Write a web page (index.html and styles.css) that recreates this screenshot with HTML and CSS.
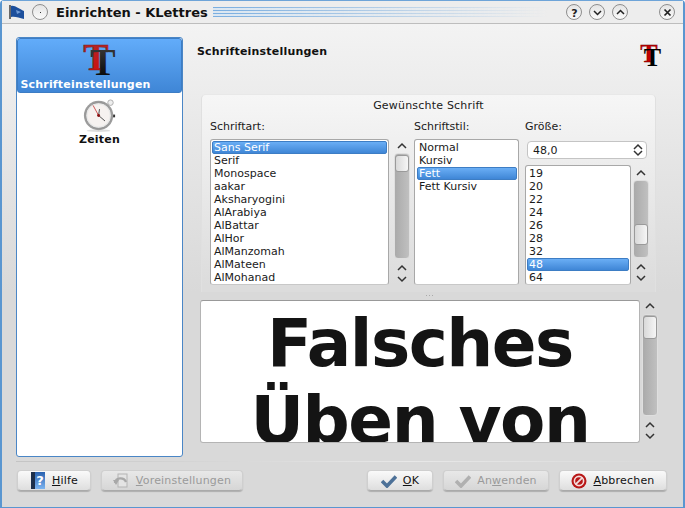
FILE: index.html
```html
<!DOCTYPE html>
<html lang="de">
<head>
    <meta charset="UTF-8">
    <meta name="viewport" content="width=device-width, initial-scale=1.0">
    <title>Einrichten - KLettres</title>
    <link rel="stylesheet" href="styles.css">
</head>
<body>
    <svg class="defs" width="0" height="0">
        <defs>
            <symbol id="chevUp" viewBox="0 0 10 7"><path d="M1 6 L5 2 L9 6" fill="none" stroke="#333" stroke-width="1.5"/></symbol>
            <symbol id="chevDown" viewBox="0 0 10 7"><path d="M1 1 L5 5 L9 1" fill="none" stroke="#333" stroke-width="1.5"/></symbol>
            <linearGradient id="redT" x1="0" y1="0" x2="0" y2="1"><stop offset="0" stop-color="#b02a2a"/><stop offset="1" stop-color="#d00c0c"/></linearGradient>
            <linearGradient id="blackT" x1="0" y1="0" x2="0" y2="1"><stop offset="0" stop-color="#444"/><stop offset="1" stop-color="#000"/></linearGradient>
            <linearGradient id="bookBlue" x1="0" y1="0" x2="0" y2="1"><stop offset="0" stop-color="#2a62b0"/><stop offset="1" stop-color="#7cb4f0"/></linearGradient>
        </defs>
    </svg>

    <div class="window">
        <header class="titlebar">
            <svg class="flag" width="16" height="16" viewBox="0 0 16 16">
                <path d="M1 1 V15" stroke="#333" stroke-width="1.4"/>
                <path d="M2 2 C6 1 10 5 15 7 V15 C10 14 6 12 2 13Z" fill="#1c4f9c"/>
                <path d="M7 6 L12 8 L8 10Z" fill="#6f9ad6"/>
            </svg>
            <span class="wbtn pin"><i></i></span>
            <span class="title">Einrichten - KLettres</span>
            <span class="stripes"></span>
            <span class="wbtn">
                <svg width="15" height="15" viewBox="0 0 15 15"><text x="7.5" y="11.5" text-anchor="middle" class="wglyph">?</text></svg>
            </span>
            <span class="wbtn">
                <svg width="15" height="15" viewBox="0 0 15 15"><path d="M4 6 L7.5 9.5 L11 6" fill="none" stroke="#222" stroke-width="1.5"/></svg>
            </span>
            <span class="wbtn">
                <svg width="15" height="15" viewBox="0 0 15 15"><path d="M4 9 L7.5 5.5 L11 9" fill="none" stroke="#222" stroke-width="1.5"/></svg>
            </span>
            <span class="wbtn close">
                <svg width="15" height="15" viewBox="0 0 15 15"><path d="M4.5 4.5 L10.5 10.5 M10.5 4.5 L4.5 10.5" fill="none" stroke="#222" stroke-width="1.7"/></svg>
            </span>
        </header>

        <main class="content">
            <nav class="sidebar">
                <div class="page active">
                    <svg class="tt" width="36" height="36" viewBox="0 0 36 36">
                        <text x="14" y="30" class="tt-glyph" fill="url(#redT)" stroke="#7a2020" stroke-width=".6">T</text>
                        <text x="21" y="34.5" class="tt-glyph" fill="url(#blackT)">T</text>
                    </svg>
                    <span>Schrifteinstellungen</span>
                </div>
                <div class="page">
                    <svg class="watch" width="33" height="33" viewBox="0 0 36 36">
                        <ellipse cx="17" cy="34.5" rx="13" ry="1.5" fill="#ddd"/>
                        <circle cx="30" cy="4" r="3" fill="#eee" stroke="#aaa"/>
                        <rect x="32" y="17" width="3" height="3" fill="#333"/>
                        <circle cx="17" cy="18" r="16" fill="#9c9c9c"/>
                        <circle cx="17" cy="18" r="14" fill="#e8e8e8" stroke="#777" stroke-width=".6"/>
                        <circle cx="17" cy="18" r="12" fill="#f6f2f0"/>
                        <path d="M17 18 L11 7" stroke="#c02020" stroke-width=".8"/>
                        <path d="M17 18 L18 11 M17 18 L24 24" stroke="#444" stroke-width="1"/>
                        <circle cx="17" cy="18" r="1.6" fill="#8a1010"/>
                    </svg>
                    <span>Zeiten</span>
                </div>
            </nav>

            <section class="panel">
                <div class="panel-head">
                    <h1>Schrifteinstellungen</h1>
                    <svg class="tt-small" width="24" height="24" viewBox="0 0 24 24">
                        <text x="10" y="19" class="tt-glyph small" fill="#c40000" stroke="#600" stroke-width=".3">T</text>
                        <text x="13.5" y="23" class="tt-glyph small" fill="#000">T</text>
                    </svg>
                </div>

                <div class="group">
                    <div class="group-title">Gewünschte Schrift</div>
                    <div class="chooser">
                        <div class="col col-family">
                            <label>Schriftart:</label>
                            <div class="with-scroll">
                                <ul class="list">
                                    <li class="sel">Sans Serif</li>
                                    <li>Serif</li>
                                    <li>Monospace</li>
                                    <li>aakar</li>
                                    <li>Aksharyogini</li>
                                    <li>AlArabiya</li>
                                    <li>AlBattar</li>
                                    <li>AlHor</li>
                                    <li>AlManzomah</li>
                                    <li>AlMateen</li>
                                    <li>AlMohanad</li>
                                </ul>
                                <div class="scroll s-family">
                                    <svg class="arrow" width="10" height="7"><use href="#chevUp"/></svg>
                                    <div class="track"><div class="thumb"></div></div>
                                    <svg class="arrow" width="10" height="7"><use href="#chevUp"/></svg>
                                    <svg class="arrow" width="10" height="7"><use href="#chevDown"/></svg>
                                </div>
                            </div>
                        </div>
                        <div class="col col-style">
                            <label>Schriftstil:</label>
                            <ul class="list">
                                <li>Normal</li>
                                <li>Kursiv</li>
                                <li class="sel">Fett</li>
                                <li>Fett Kursiv</li>
                            </ul>
                        </div>
                        <div class="col col-size">
                            <label>Größe:</label>
                            <div class="spin">
                                <span>48,0</span>
                                <span class="spin-arrows">
                                    <svg width="10" height="7"><use href="#chevUp"/></svg>
                                    <svg width="10" height="7"><use href="#chevDown"/></svg>
                                </span>
                            </div>
                            <div class="with-scroll size-wrap">
                                <ul class="list">
                                    <li>19</li>
                                    <li>20</li>
                                    <li>22</li>
                                    <li>24</li>
                                    <li>26</li>
                                    <li>28</li>
                                    <li>32</li>
                                    <li class="sel">48</li>
                                    <li>64</li>
                                </ul>
                                <div class="scroll s-size">
                                    <svg class="arrow" width="10" height="7"><use href="#chevUp"/></svg>
                                    <div class="track"><div class="thumb"></div></div>
                                    <svg class="arrow" width="10" height="7"><use href="#chevUp"/></svg>
                                    <svg class="arrow" width="10" height="7"><use href="#chevDown"/></svg>
                                </div>
                            </div>
                        </div>
                    </div>
                </div>

                <div class="splitter"></div>

                <div class="preview-row">
                    <div class="preview">Falsches Üben von</div>
                    <div class="scroll s-preview">
                        <svg class="arrow" width="10" height="7"><use href="#chevUp"/></svg>
                        <div class="track"><div class="thumb"></div></div>
                        <svg class="arrow" width="10" height="7"><use href="#chevUp"/></svg>
                        <svg class="arrow" width="10" height="7"><use href="#chevDown"/></svg>
                    </div>
                </div>
            </section>
        </main>

        <footer class="buttons">
            <button class="btn b-help">
                <svg width="16" height="17" viewBox="0 0 16 17">
                    <rect x="1" y="0" width="14" height="17" fill="url(#bookBlue)"/>
                    <rect x="1" y="0" width="4" height="17" fill="#1d2f4a"/>
                    <text x="10" y="13" text-anchor="middle" class="help-q">?</text>
                </svg>
                <span><u>H</u>ilfe</span>
            </button>
            <button class="btn b-defaults" disabled>
                <svg width="18" height="16" viewBox="0 0 18 16">
                    <rect x="5" y="1" width="9" height="13" fill="#e4e4e4" stroke="#b4b4b4"/>
                    <path d="M2 10 C3 4 11 4 13 9" fill="none" stroke="#a8a8a8" stroke-width="2.4"/>
                    <path d="M0 7 H6 L3 12Z" fill="#a8a8a8"/>
                </svg>
                <span><u>V</u>oreinstellungen</span>
            </button>
            <span class="spacer"></span>
            <button class="btn b-ok">
                <svg width="16" height="14" viewBox="0 0 16 14"><path d="M1 7 L6 12 L15 2.5" fill="none" stroke="#4d7198" stroke-width="3.6"/></svg>
                <span><u>O</u>K</span>
            </button>
            <button class="btn b-apply" disabled>
                <svg width="16" height="14" viewBox="0 0 16 14"><path d="M1 7 L6 12 L15 2.5" fill="none" stroke="#b0b0b0" stroke-width="3.6"/></svg>
                <span>An<u>w</u>enden</span>
            </button>
            <button class="btn b-cancel">
                <svg width="16" height="16" viewBox="0 0 16 16">
                    <circle cx="8" cy="8" r="7.5" fill="#b81818"/>
                    <circle cx="8" cy="8" r="4.6" fill="none" stroke="#f3dede" stroke-width="1.6"/>
                    <path d="M4.6 11.4 L11.4 4.6" stroke="#f3dede" stroke-width="1.8"/>
                </svg>
                <span><u>A</u>bbrechen</span>
            </button>
        </footer>
    </div>
</body>
</html>
```

FILE: styles.css
```css
html, body {
    margin: 0;
    padding: 0;
    overflow: hidden;
}
body {
    font-family: 'DejaVu Sans', sans-serif;
    font-size: 11px;
    color: #1a1a1a;
}
.defs {
    position: absolute;
}
.window {
    box-sizing: border-box;
    width: 685px;
    height: 508px;
    border: 1px solid #5a96d0;
    border-top-color: #6ea4d8;
    border-left-width: 2px;
    border-right-width: 2px;
    border-radius: 4px 4px 0 0;
    display: flex;
    flex-direction: column;
    background: linear-gradient(#f3f3f3 24px, #e6e6e6 150px, #d9d9d9 290px);
}

/* title bar */
.titlebar {
    box-sizing: border-box;
    height: 23px;
    flex: none;
    display: flex;
    align-items: center;
    padding: 0 8px 0 7px;
    background: #ededed;
    border-bottom: 1px solid #bdbdbd;
}
.flag {
    margin-right: 7px;
}
.wbtn {
    box-sizing: border-box;
    width: 16px;
    height: 16px;
    border-radius: 50%;
    border: 1px solid #8e8e8e;
    background: linear-gradient(#e4e4e4, #fafafa);
    display: flex;
    align-items: center;
    justify-content: center;
    margin-left: 7px;
    flex: none;
}
.wbtn svg {
    display: block;
    flex: none;
}
.wbtn.pin {
    margin-left: 0;
}
.wbtn.pin i {
    width: 1px;
    height: 1px;
    background: #333;
}
.wbtn.close {
    margin-left: 31px;
}
.wglyph {
    font: bold 11px 'DejaVu Sans', sans-serif;
    fill: #222;
}
.title {
    font-size: 13px;
    font-weight: bold;
    margin-left: 8px;
    color: #111;
    white-space: nowrap;
}
.stripes {
    flex: 1;
    height: 10px;
    margin: 0 12px 0 5px;
    background:
        linear-gradient(90deg, rgba(236, 236, 236, 0), #ededed),
        repeating-linear-gradient(#7aaee0 0, #7aaee0 1px, #dbe7f2 1px, #dbe7f2 3px);
}

/* main area */
.content {
    flex: 1;
    min-height: 0;
    display: flex;
    padding: 13px 14px 0 14px;
}
.sidebar {
    box-sizing: border-box;
    width: 167px;
    height: 420px;
    flex: none;
    background: #fff;
    border: 1px solid #4a86c6;
    border-radius: 3px;
    padding: 0;
}
.page {
    display: flex;
    flex-direction: column;
    align-items: center;
    font-weight: bold;
    font-size: 11px;
    letter-spacing: .2px;
    color: #111;
    padding-top: 6px;
}
.page.active {
    height: 55px;
    padding-top: 0;
    box-sizing: border-box;
    background: linear-gradient(#62acfa, #3f86d6);
    color: #fff;
    border: 1px solid #3d7dc4;
    border-radius: 3px;
}
.page svg {
    display: block;
    flex: none;
    overflow: visible;
}
.page.active .tt {
    margin-top: 1px;
}
.page.active span {
    margin: 2px 28px 0 0;
}
.page .watch {
    margin: 0 0 1px;
}
.tt-glyph {
    font: bold 38px 'Liberation Serif', serif;
    text-anchor: middle;
}
.tt-glyph.small {
    font-size: 26px;
}

/* right side */
.panel {
    flex: 1;
    min-width: 0;
    margin-left: 14px;
    display: flex;
    flex-direction: column;
}
.panel-head {
    height: 57px;
    display: flex;
    justify-content: space-between;
    flex: none;
}
.panel-head h1 {
    margin: 8px 0 0;
    font-size: 11px;
    font-weight: bold;
    letter-spacing: .2px;
    color: #111;
}
.tt-small {
    margin: 6px 6px 0 0;
    overflow: visible;
}
.group {
    box-sizing: border-box;
    margin-left: 4px;
    width: 455px;
    height: 198px;
    flex: none;
    border-radius: 5px 5px 0 0;
    border-top: 1px solid #e8e8e8;
    border-left: 1px solid #e0e0e0;
    border-right: 1px solid #e0e0e0;
    background: linear-gradient(#f6f6f6, #dcdcdc 190px);
    padding: 0 0 0 8px;
}
.group-title {
    text-align: center;
    line-height: 13px;
    letter-spacing: .2px;
    padding-top: 4px;
    margin-left: -8px;
    height: 17px;
}
.chooser {
    display: flex;
    margin-top: 4px;
}
.col label {
    display: block;
    line-height: 13px;
    height: 19px;
}
.col-family {
    width: 204px;
}
.col-style {
    width: 111px;
}
.col-size {
    width: 124px;
}
.with-scroll {
    display: flex;
}
.list {
    list-style: none;
    margin: 0;
    padding: 1px 1px;
    box-sizing: border-box;
    background: #fff;
    border: 1px solid #a8a8a8;
    border-bottom-color: #c8c8c8;
    border-radius: 3px;
    height: 146px;
    overflow: hidden;
    line-height: 13px;
}
.col-family .list {
    width: 179px;
}
.col-style .list {
    width: 105px;
    padding-left: 2px;
}
.list li {
    padding-left: 2px;
    height: 13px;
    white-space: nowrap;
}
.list li.sel {
    background: linear-gradient(#6aaef5, #3f86d6);
    border: 1px solid #3d7dc4;
    border-radius: 2px;
    color: #fff;
    box-sizing: border-box;
    padding-left: 1px;
    line-height: 11px;
}
.spin {
    box-sizing: border-box;
    width: 120px;
    height: 18px;
    margin: 2px 0 6px 2px;
    background: #fff;
    border: 1px solid #c4c4c4;
    border-radius: 4px;
    display: flex;
    justify-content: space-between;
    align-items: center;
    padding: 0 3px 0 5px;
}
.spin-arrows {
    display: flex;
    flex-direction: column;
}
.spin-arrows svg {
    display: block;
}
.size-wrap .list {
    width: 107px;
    height: 120px;
}

/* scroll bars */
.scroll {
    display: flex;
    flex-direction: column;
    align-items: center;
    flex: none;
}
.arrow {
    display: block;
    flex: none;
}
.track {
    box-sizing: border-box;
    background: linear-gradient(90deg, #aaa, #c0c0c0);
    border: 1px solid #dfdfdf;
    border-radius: 4px;
    flex: none;
}
.thumb {
    box-sizing: border-box;
    background: linear-gradient(90deg, #d9d9d9, #f6f6f6);
    border: 1px solid #9a9a9a;
    border-radius: 3px;
}
.s-family {
    width: 18px;
    margin-left: 4px;
    padding-top: 3px;
}
.s-family .track {
    width: 16px;
    height: 106px;
    margin: 4px 0 5px;
    padding-top: 1px;
}
.s-family .thumb {
    height: 17px;
}
.s-family .arrow + .track + .arrow + .arrow {
    margin-top: 5px;
}
.s-size {
    width: 16px;
    margin-left: 2px;
    padding-top: 4px;
}
.s-size .track {
    width: 16px;
    height: 78px;
    margin: 4px 0 5px;
    padding-top: 43px;
}
.s-size .thumb {
    height: 21px;
}
.s-size .arrow + .track + .arrow + .arrow {
    margin-top: 5px;
}
.splitter {
    flex: none;
    height: 1px;
    width: 9px;
    margin: 3px 0 4px 229px;
    background: repeating-linear-gradient(90deg, #aaa 0, #aaa 1px, transparent 1px, transparent 3px);
}
.preview-row {
    display: flex;
    flex: none;
}
.preview {
    box-sizing: border-box;
    width: 440px;
    margin-left: 3px;
    height: 143px;
    background: #fff;
    border: 1px solid #b4b4b4;
    border-top-color: #999;
    border-radius: 3px;
    overflow: hidden;
    text-align: center;
    font-size: 66px;
    letter-spacing: -1.5px;
    font-weight: bold;
    line-height: 77px;
    color: #141414;
    padding: 4px 20px 0;
}
.s-preview {
    width: 16px;
    margin-left: 2px;
    padding-top: 2px;
}
.s-preview .track {
    width: 16px;
    height: 102px;
    margin: 5px 0 5px;
    padding-top: 1px;
}
.s-preview .thumb {
    height: 23px;
}
.s-preview .arrow + .track + .arrow + .arrow {
    margin-top: 5px;
}

/* bottom buttons */
.buttons {
    box-sizing: border-box;
    height: 46px;
    flex: none;
    margin: 0 14px 0 14px;
    padding: 8px 0 0 1px;
    display: flex;
    gap: 10px;
    border-top: 1px solid;
    border-image: linear-gradient(90deg, #c4c4c4, #e8e8e8 60%, rgba(216, 216, 216, 0)) 1;
}
.btn {
    box-sizing: border-box;
    height: 21px;
    font: 11px 'DejaVu Sans', sans-serif;
    letter-spacing: .2px;
    color: #111;
    background: linear-gradient(#fafafa, #dedede);
    border: 1px solid #cfcfcf;
    border-bottom-color: #aaa;
    border-radius: 4px;
    box-shadow: 0 1px 1px rgba(0, 0, 0, .2);
    display: flex;
    align-items: center;
    justify-content: center;
    gap: 6px;
    padding: 0;
}
.btn[disabled] {
    color: #9a9a9a;
    background: linear-gradient(#e8e8e8, #d6d6d6);
}
.btn svg {
    display: block;
    flex: none;
}
.help-q {
    font: bold 13px 'DejaVu Sans', sans-serif;
    fill: #fff;
}
.b-help {
    width: 74px;
}
.b-defaults {
    width: 142px;
    gap: 5px;
}
.spacer {
    flex: 1;
}
.b-ok {
    width: 66px;
}
.b-apply {
    width: 106px;
}
.b-cancel {
    width: 108px;
    margin-right: 2px;
}
```
